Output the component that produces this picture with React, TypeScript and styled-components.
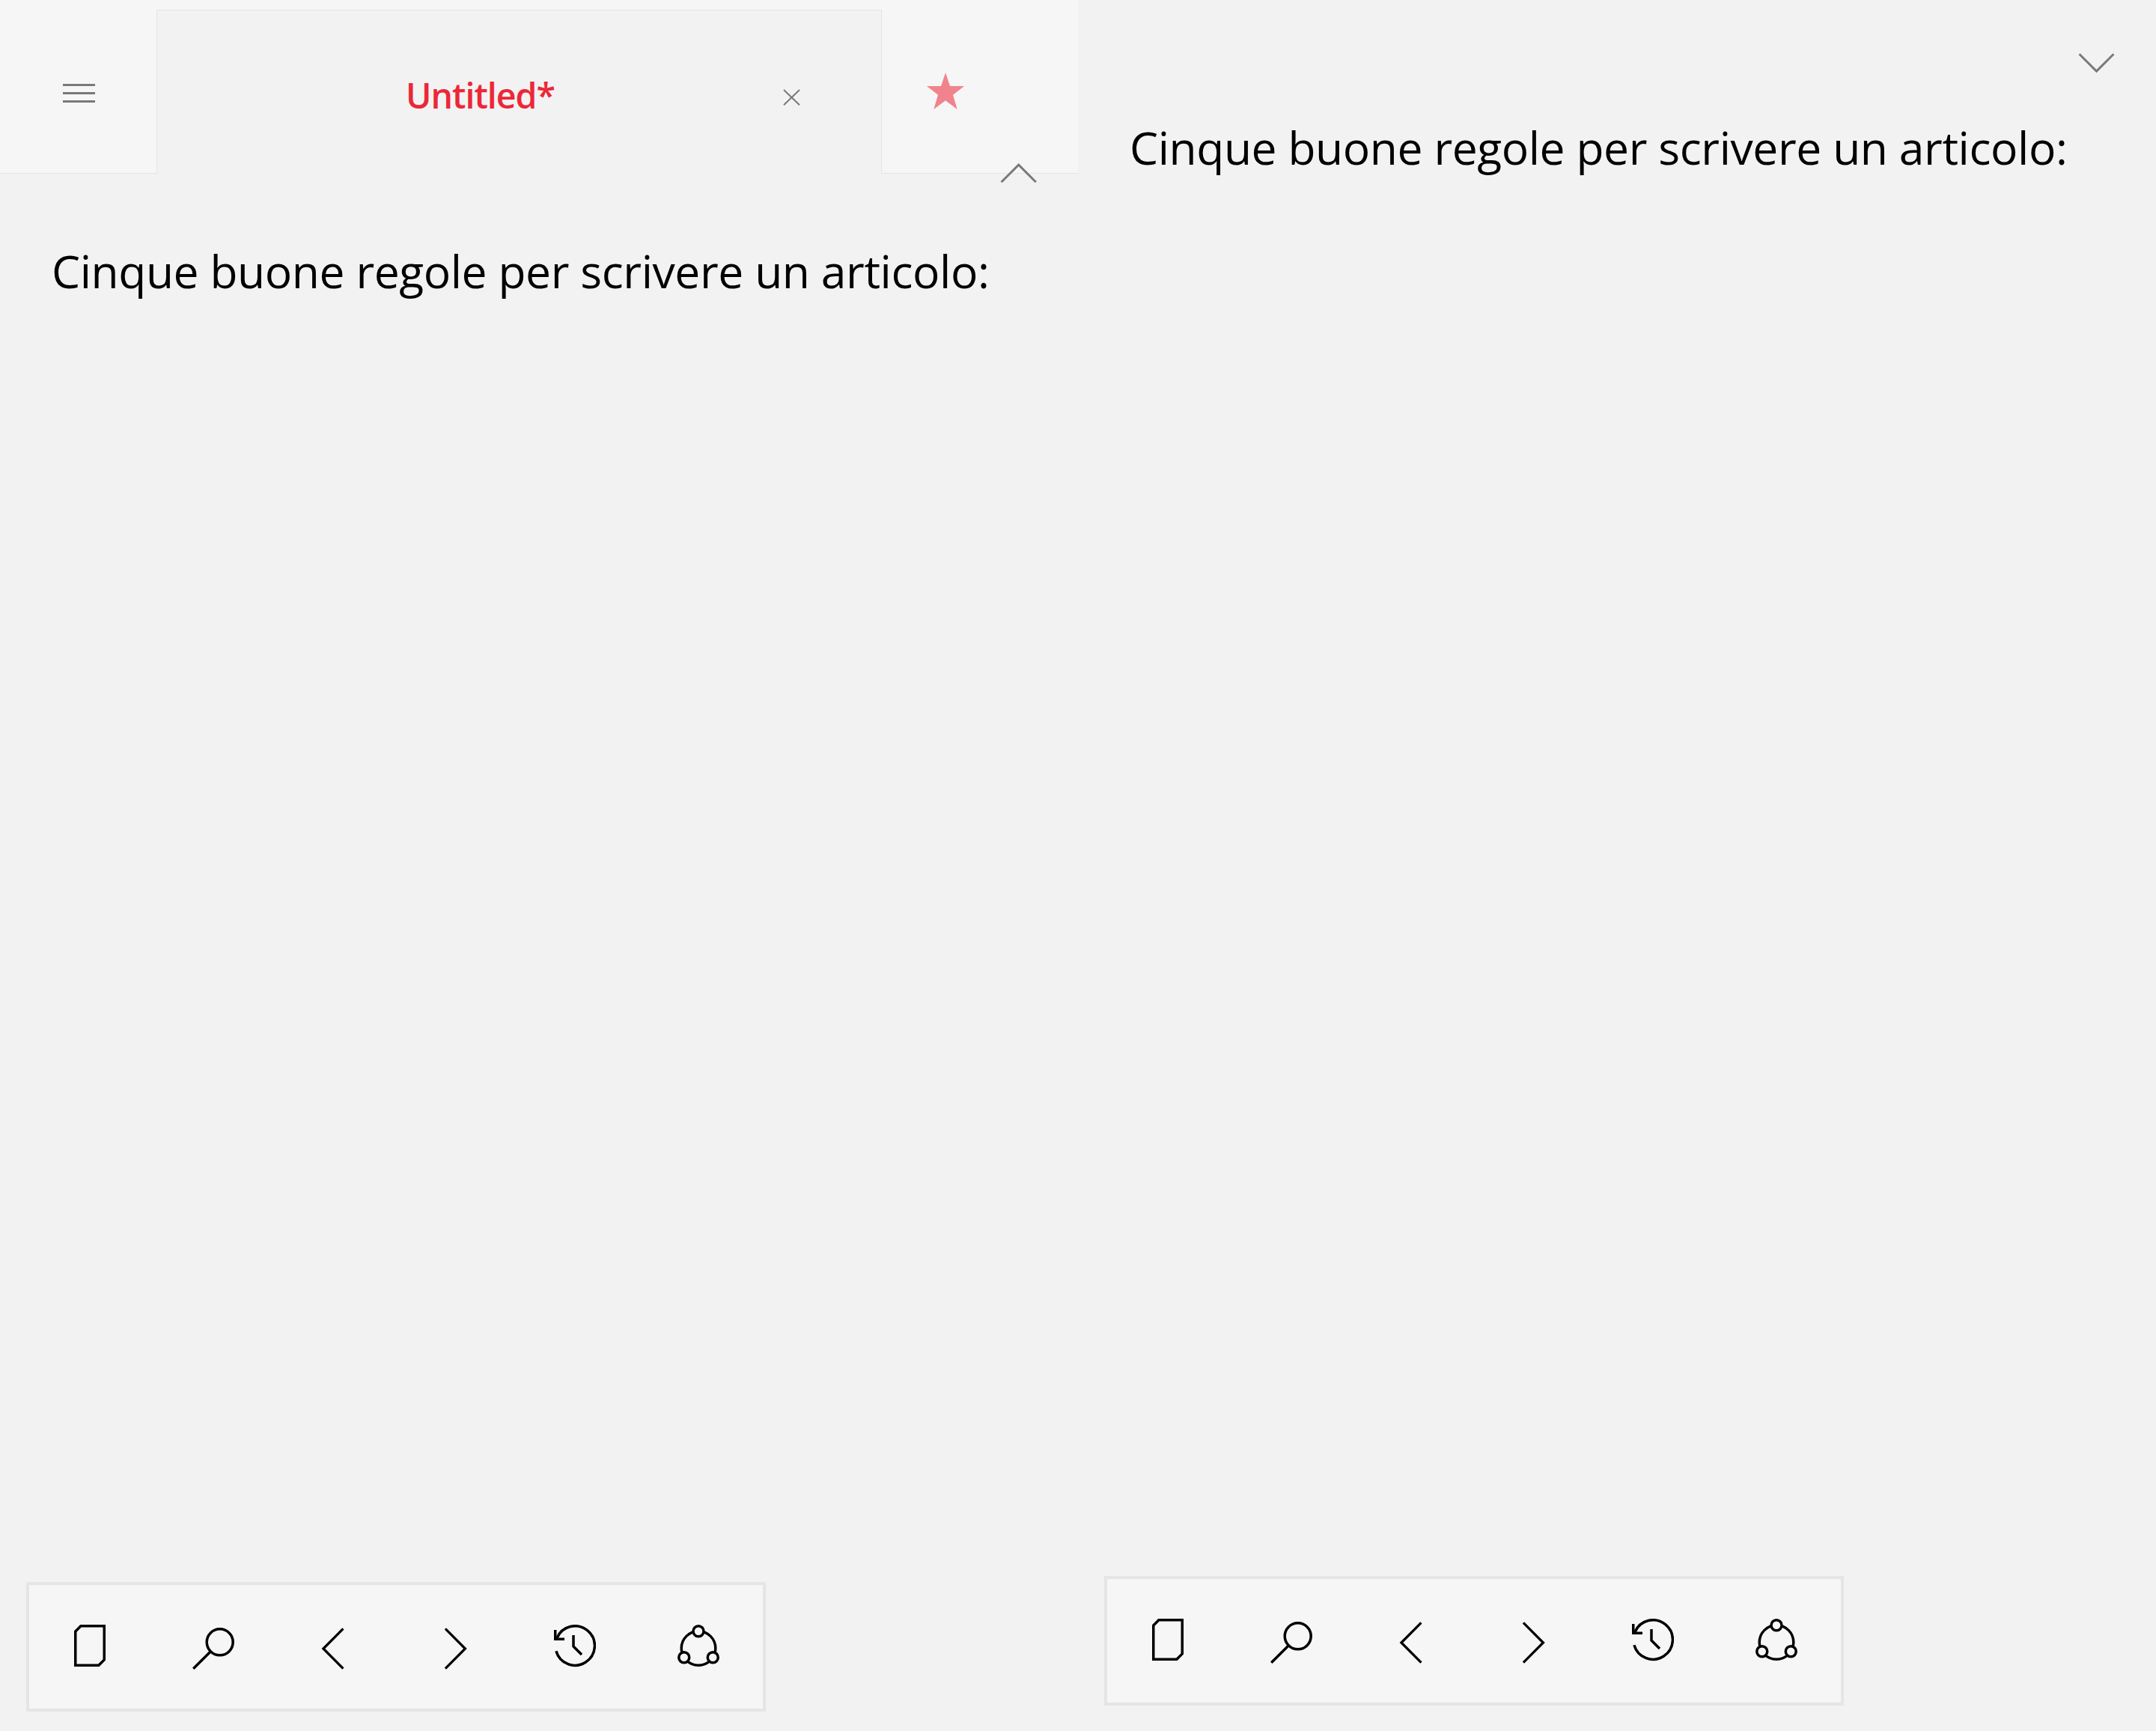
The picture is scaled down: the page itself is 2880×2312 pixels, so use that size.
import type { ReactNode } from "react";
import styled, { createGlobalStyle } from "styled-components";

const GlobalStyle = createGlobalStyle`
  * {
    box-sizing: border-box;
  }
  body {
    margin: 0;
    background-color: #f2f2f2;
    font-family: "Segoe UI", "Open Sans", "Noto Sans", sans-serif;
  }
  button {
    padding: 0;
    border: none;
    background: none;
    font: inherit;
    cursor: pointer;
  }
  svg {
    display: block;
    fill: none;
  }
`;

const Screens = styled.main`
  display: flex;
  width: 2880px;
  height: 2312px;
`;

const Screen = styled.section<{ $bottom: number }>`
  display: flex;
  flex-direction: column;
  width: 1440px;
  height: 100%;
  padding-bottom: ${(props) => props.$bottom}px;
  background-color: #f2f2f2;
`;

const TopBar = styled.header`
  position: relative;
  display: flex;
  align-items: flex-end;
  height: 232px;
  background-color: #f6f6f6;
`;

const MenuArea = styled.div`
  width: 209px;
  height: 100%;
  padding: 112px 0 0 84px;
  border-bottom: 1px solid #e5e5e5;
`;

const Tab = styled.div`
  display: flex;
  width: 969px;
  height: 219px;
  padding-left: 332px;
  border: 1px solid #e5e5e5;
  border-bottom: none;
  background-color: #f2f2f2;
`;

const TabTitle = styled.span`
  width: 504px;
  padding-top: 83px;
  font-size: 46.5px;
  font-weight: 600;
  line-height: 60px;
  letter-spacing: -1px;
  white-space: nowrap;
  color: #ec2738;
`;

const CloseButton = styled.button`
  height: 22px;
  margin-top: 105px;
`;

const FavArea = styled.div`
  flex: 1;
  height: 100%;
  padding: 96px 0 0 59px;
  border-bottom: 1px solid #e5e5e5;
`;

/* hangs over the lower edge of the top bar */
const CollapseButton = styled.button`
  position: absolute;
  top: 217px;
  right: 54px;
`;

const ExpandButton = styled.button`
  align-self: flex-end;
  margin: 70px 54px 0 0;
`;

const Text = styled.p<{ $top: number }>`
  margin: ${(props) => props.$top}px 0 0 69px;
  font-size: 60.5px;
  line-height: 81px;
  letter-spacing: -0.4px;
  white-space: nowrap;
  color: #000;
`;

const ToolBar = styled.nav`
  display: flex;
  gap: 103px;
  width: 988px;
  height: 173px;
  margin: auto 0 0 35px;
  padding: 53px 0 0 53px;
  border: 4px solid #e5e5e5;
  background-color: #f6f6f6;
`;

const ToolGroup = styled.div`
  display: flex;
  gap: 109px;
`;

const ToolButton = styled.button`
  width: 56px;
  height: 60px;
`;

const Tool = ({ label, children }: { label: string; children: ReactNode }) => (
  <ToolButton aria-label={label}>
    <svg
      width="56"
      height="60"
      viewBox="0 0 56 60"
      stroke="#000"
      strokeWidth="3.5"
    >
      {children}
    </svg>
  </ToolButton>
);

function Tools() {
  return (
    <ToolBar>
      <ToolGroup>
        <Tool label="New">
          <path d="M15.9 1.75H47.25V46.9L39.9 54.25H8.75V8.9Z" />
        </Tool>
        <Tool label="Search">
          <circle cx="36.7" cy="23.3" r="17.5" />
          <path d="M24.4 35.7L1.2 58.8" />
        </Tool>
      </ToolGroup>
      <ToolGroup>
        <Tool label="Back">
          <path d="M42.4 5.4L15.9 32L42.4 58.6" strokeWidth="3.3" />
        </Tool>
        <Tool label="Forward">
          <path d="M13.9 5.4L40.4 32L13.9 58.6" strokeWidth="3.3" />
        </Tool>
      </ToolGroup>
      <ToolGroup>
        <Tool label="History">
          <path d="M3.9 18A26.25 26.25 0 1 1 2.9 35.2" />
          <path d="M1.75 7V19.25H14" />
          <path d="M26 14V29L37 40" />
        </Tool>
        <Tool label="Share">
          <circle cx="28" cy="31.5" r="22.8" />
          <circle cx="28" cy="8.75" r="7" fill="#f6f6f6" />
          <circle cx="8.75" cy="43.75" r="7" fill="#f6f6f6" />
          <circle cx="47.25" cy="43.75" r="7" fill="#f6f6f6" />
        </Tool>
      </ToolGroup>
    </ToolBar>
  );
}

function App() {
  return (
    <>
      <GlobalStyle />
      <Screens>
        <Screen $bottom={26}>
          <TopBar>
            <MenuArea>
              <svg width="43" height="25" viewBox="0 0 43 25">
                <path
                  d="M0 1.5H43M0 12.5H43M0 23.5H43"
                  stroke="#797979"
                  strokeWidth="3"
                />
              </svg>
            </MenuArea>
            <Tab>
              <TabTitle>Untitled*</TabTitle>
              <CloseButton aria-label="Close">
                <svg width="23" height="22" viewBox="0 0 23 22">
                  <path
                    d="M1 1L22 21.3M22 1L1 21.3"
                    stroke="#797979"
                    strokeWidth="2"
                  />
                </svg>
              </CloseButton>
            </Tab>
            <FavArea>
              <svg width="54" height="52" viewBox="0 0 54 52">
                <path
                  d="M26 1L32 19H51L36 30.7L41.7 50L26 38.3L10.3 50L16 30.7L1 19H20Z"
                  fill="#f1838c"
                />
              </svg>
            </FavArea>
            <CollapseButton aria-label="Collapse">
              <svg width="50" height="28" viewBox="0 0 50 28">
                <path
                  d="M1.6 26.3L24.7 3.2L47.8 26.3"
                  stroke="#797979"
                  strokeWidth="3"
                />
              </svg>
            </CollapseButton>
          </TopBar>
          <Text $top={89}>Cinque buone regole per scrivere un articolo:</Text>
          <Tools />
        </Screen>
        <Screen $bottom={34}>
          <ExpandButton aria-label="Expand">
            <svg width="50" height="28" viewBox="0 0 50 28">
              <path
                d="M1.6 2.3L24.5 25.1L47.4 2.3"
                stroke="#797979"
                strokeWidth="3"
              />
            </svg>
          </ExpandButton>
          <Text $top={58}>Cinque buone regole per scrivere un articolo:</Text>
          <Tools />
        </Screen>
      </Screens>
    </>
  );
}

export default App;
